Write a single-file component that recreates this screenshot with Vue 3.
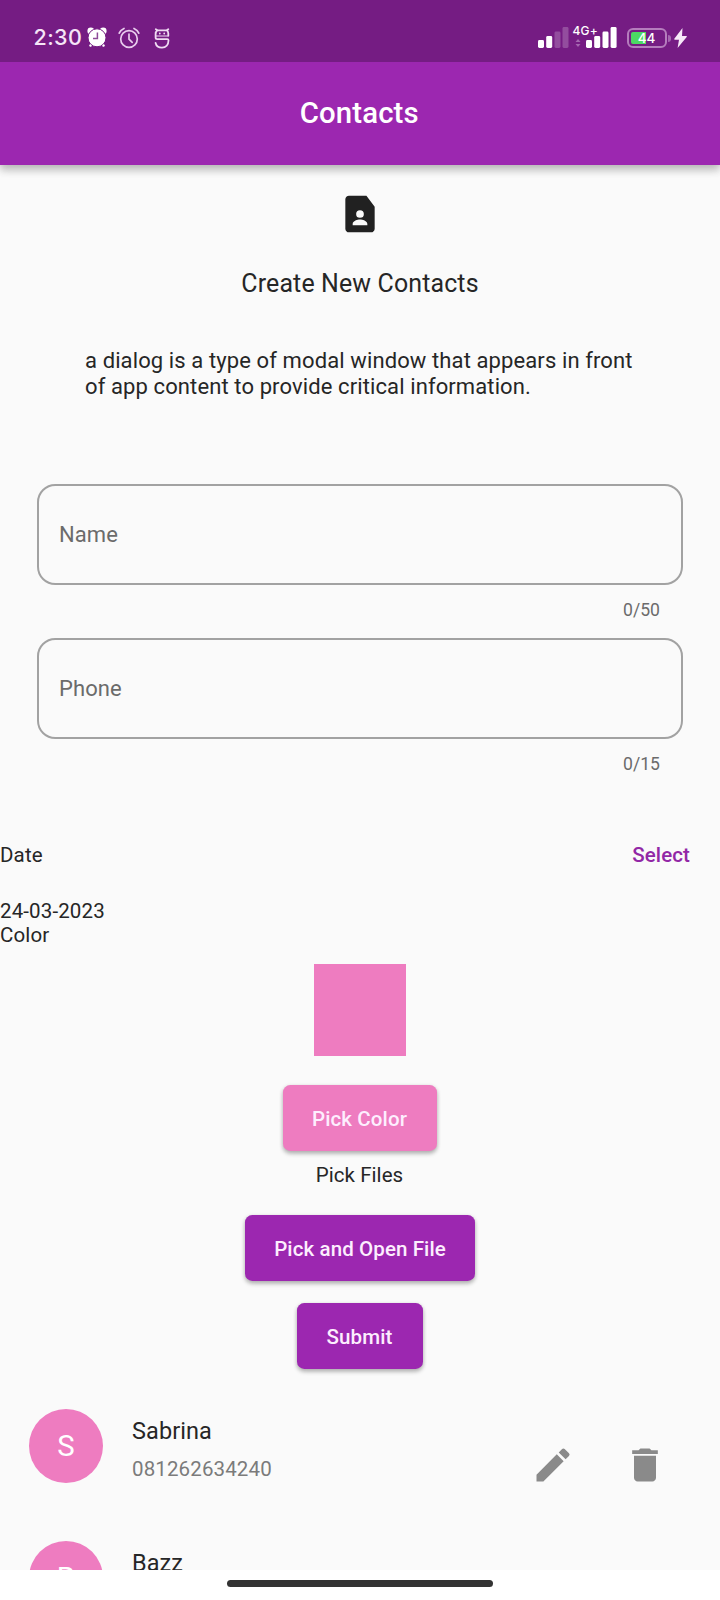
<script setup>
const fields = [
  { label: 'Name', counter: '0/50' },
  { label: 'Phone', counter: '0/15' },
]

const contacts = [
  { name: 'Sabrina', phone: '081262634240' },
  { name: 'Bazz', phone: '' },
]
</script>

<template>
  <div class="screen">
    <header class="top">
      <div class="status">
        <span class="clock">2:30</span>
        <svg class="alarm-solid" width="20" height="20" viewBox="0 0 20 20">
          <g fill="#fff">
            <circle cx="3.8" cy="4" r="3.4" />
            <circle cx="16.2" cy="4" r="3.4" />
            <path d="M4 15l2 2-2 3-2-1zM16 15l-2 2 2 3 2-1z" />
          </g>
          <circle cx="10" cy="10.8" r="9" fill="#fff" stroke="#751c83" stroke-width="1" />
          <path d="M10.4 5.500v6H6" fill="none" stroke="#8d4a98" stroke-width="1.500" />
        </svg>
        <svg class="alarm-line" width="22" height="22" viewBox="0 0 22 22" fill="none" stroke="#e9cdee" stroke-width="1.700" stroke-linecap="round">
          <circle cx="11" cy="12" r="8.300" />
          <path d="M11 7.200v5l3.200 3.200M1.200 6.200C2.200 4 3.700 2.500 6 1.500M20.800 6.200C19.800 4 18.300 2.500 16 1.500" />
        </svg>
        <svg class="s-mark" width="16" height="21" viewBox="0 0 16 21" fill="none" stroke="#f0dcf3" stroke-width="1.800" stroke-linecap="round" stroke-linejoin="round">
          <path d="M14.300 7.700V5.500C14.300 4 13.600 3 12.700 2.300H3.500C2.300 3.200 1.600 4.500 1.600 6.200V9.500c0 1 .6 1.600 1.600 1.600h10.100c.8 0 1.200.4 1.200 1.200 0 4.500-2.600 7.300-6.500 7.300-3.500 0-5.800-1.800-6.400-4.600M3.500 2.300L1.800 1.200M12.700 2.300l1.600-1.100" />
          <path d="M5.800 5.500v.1M10.200 5.500v.1" />
          <path d="M2 8h12" stroke-width="1.200" />
        </svg>
        <span class="spacer"></span>
        <svg class="signal" width="31" height="21" viewBox="0 0 31 21" fill="#fff">
          <rect x="0" y="13" width="6" height="8" rx="1.400" />
          <rect x="8.200" y="9" width="6" height="12" rx="1.400" />
          <rect x="16.500" y="4.500" width="6" height="16.500" rx="1.400" opacity=".22" />
          <rect x="24.500" y="0" width="6" height="21" rx="1.400" opacity=".22" />
        </svg>
        <div class="mobile">
          <span class="net">4G+</span>
          <svg class="arrows" width="6" height="8" viewBox="0 0 6 8" fill="#a566b0">
            <path d="M3 0l2.500 3h-5zM3 8l2.500-3h-5z" />
          </svg>
          <svg class="bars" width="31" height="21" viewBox="0 0 31 21" fill="#fff">
            <rect x="0" y="13" width="6" height="8" rx="1.400" />
            <rect x="8.200" y="9" width="6" height="12" rx="1.400" />
            <rect x="16.500" y="4.500" width="6" height="16.500" rx="1.400" />
            <rect x="24.600" y="0" width="6" height="21" rx="1.400" />
          </svg>
        </div>
        <div class="battery"><span class="level"></span><span class="pct">44</span></div>
        <span class="nub"></span>
        <svg class="bolt" width="13" height="20" viewBox="0 0 13 20" fill="#f6e8f8">
          <path d="M8.500 0L.300 10.800c-.3.5 0 .9.400.9H5L3.600 20 12.700 8.900c.3-.5 0-.9-.4-.9H8z" />
        </svg>
      </div>
      <h1 class="bar">Contacts</h1>
    </header>

    <main class="content">
      <svg class="page-icon" width="44" height="44" viewBox="0 0 24 24" fill="#212121">
        <path d="M15.500 2H6C4.900 2 4 2.900 4 4v16c0 1.100.9 2 2 2h12c1.100 0 2-.9 2-2V8zm-3.500 7.900a2.100 2.100 0 1 1 0 4.200 2.100 2.100 0 0 1 0-4.200zm4 8.300H8v-.8c0-1.600 2.700-2.400 4-2.400s4 .8 4 2.400z" />
      </svg>
      <h2 class="title">Create New Contacts</h2>
      <p class="desc">a dialog is a type of modal window that appears in front<br />of app content to provide critical information.</p>

      <div class="form">
        <div v-for="f in fields" :key="f.label" class="field">
          <div class="box">{{ f.label }}</div>
          <div class="counter">{{ f.counter }}</div>
        </div>
      </div>

      <div class="date-row"><span>Date</span><span class="select">Select</span></div>
      <div class="line first">24-03-2023</div>
      <div class="line">Color</div>

      <div class="picker">
        <div class="swatch"></div>
        <button class="btn pink">Pick Color</button>
        <div class="line files">Pick Files</div>
        <button class="btn open">Pick and Open File</button>
        <button class="btn submit">Submit</button>
      </div>

      <div v-for="c in contacts" :key="c.name" class="contact">
        <div class="avatar">{{ c.name[0] }}</div>
        <div class="who">
          <div class="name">{{ c.name }}</div>
          <div class="phone">{{ c.phone }}</div>
        </div>
        <svg class="edit" width="44" height="44" viewBox="0 0 24 24" fill="#8a8a8a">
          <path d="M3 17.250V21h3.750L17.810 9.940l-3.750-3.750L3 17.250zM20.710 7.040a1 1 0 0 0 0-1.410l-2.340-2.340a1 1 0 0 0-1.410 0l-1.830 1.830 3.750 3.750 1.830-1.830z" />
        </svg>
        <svg class="trash" width="44" height="44" viewBox="0 0 24 24" fill="#8a8a8a">
          <path d="M6 19c0 1.100.9 2 2 2h8c1.100 0 2-.9 2-2V7H6v12zM19 4h-3.500l-1-1h-5l-1 1H5v2h14V4z" />
        </svg>
      </div>
    </main>

    <footer class="nav"><span class="handle"></span></footer>
  </div>
</template>

<style>
body { margin: 0; background: #fff; }
</style>

<style scoped>
.screen {
  width: 720px; height: 1600px; overflow: hidden;
  display: flex; flex-direction: column;
  font-family: Roboto, "Liberation Sans", sans-serif;
  font-size: 20.53px; color: #262626; background: #fff;
}
.top {
  flex: none; height: 164.6px; background: #9c27b0; position: relative; z-index: 1;
  box-shadow: 0 5px 8px rgba(0,0,0,.2), 0 1px 12px rgba(0,0,0,.14);
}
.status { height: 62px; background: #751c83; display: flex; align-items: flex-start; color: #fff; }
.clock { width: 53px; padding-left: 33.500px; margin-right: .5px; margin-top: 23px; font: 500 21.500px/28px Inter, sans-serif; letter-spacing: .4px; color: #f5e5f7; }
.alarm-solid { margin-top: 27px; }
.alarm-line { margin: 27px 0 0 11px; }
.s-mark { margin: 27.500px 0 0 14px; }
.spacer { flex: 1; }
.signal { margin-top: 27px; }
.mobile { position: relative; width: 48px; height: 62px; }
.net { position: absolute; left: 4px; top: 23px; font: 500 12px/15px Inter, sans-serif; letter-spacing: .2px; }
.arrows { position: absolute; left: 6.500px; top: 39px; }
.bars { position: absolute; left: 17px; top: 27px; }
.battery {
  position: relative; box-sizing: border-box; width: 40px; height: 20px; margin: 28px 0 0 10px;
  border: 2px solid #b57dbd; border-radius: 6px;
}
.level { position: absolute; left: 2px; top: 2px; width: 15px; height: 12px; border-radius: 2px 0 0 2px; background: #4cd964; }
.pct { position: absolute; left: 0; right: 0; top: 0; text-align: center; font: 500 13.500px/16px Inter, sans-serif; }
.nub { width: 3px; height: 7px; margin: 35px 3px 0 1px; border-radius: 0 3px 3px 0; background: #a566b0; }
.bolt { margin: 28px 33.500px 0 0; }
.bar { margin: 0; padding-right: 1.500px; font-size: 29.330px; font-weight: 500; line-height: 102px; text-align: center; color: #fff; letter-spacing: .15px; }
.content { height: 1405.500px; flex: none; overflow: hidden; background: #fafafa; display: flex; flex-direction: column; }
.content > * { flex: none; }
.page-icon { margin: 27px auto 0; }
.title { margin: 32.500px 0 0; text-align: center; font-size: 24.930px; font-weight: 400; line-height: 31px; letter-spacing: .14px; }
.desc { margin: 48.500px 0 0 85px; font-size: 22px; line-height: 26px; white-space: nowrap; letter-spacing: .11px; }
.form { margin: 84px 37px 0; }
.field { height: 154px; }
.box {
  box-sizing: border-box; height: 101px; border: 2px solid #a2a2a2; border-radius: 18.300px;
  padding-left: 20px; font-size: 22px; line-height: 98px; color: #6b6b6b; letter-spacing: .1px;
}
.counter { margin: 15px 23px 0 0; text-align: right; font-size: 17.600px; line-height: 20px; color: #6b6b6b; }
.date-row { margin-top: 51px; height: 24px; display: flex; justify-content: space-between; align-items: center; line-height: 24px; letter-spacing: .15px; }
.select { margin-right: 30px; color: #9227a6; font-weight: 500; letter-spacing: .1px; }
.first { margin-top: 32px; }
.line { line-height: 24px; letter-spacing: .12px; }
.picker { display: flex; flex-direction: column; align-items: center; }
.swatch { width: 92px; height: 92px; margin-top: 17px; background: #ee7cc0; }
.btn {
  border: 0; height: 66px; margin: 11px 0; padding: 0 1px 0 0; border-radius: 7.300px; background: #9c27b0; color: #fdeefe;
  font: 500 20.530px/69px Roboto, sans-serif; letter-spacing: .1px;
  box-shadow: 0 3px 4px rgba(0,0,0,.22), 0 1px 4px rgba(0,0,0,.14);
}
.pink { width: 154px; margin-top: 29px; background: #ee7cc0; }
.files { height: 24px; line-height: 26px; padding-right: 1px; letter-spacing: .05px; }
.open { width: 230px; margin-top: 29px; padding: 0; }
.submit { width: 126px; }
.contact { height: 132px; display: flex; align-items: flex-start; }
.avatar {
  width: 74px; height: 74px; margin: 29px 29px 0; border-radius: 50%; background: #ee7cc0;
  color: #fff; text-align: center; font-size: 29.330px; line-height: 74px;
}
.who { width: 399px; padding-top: 37px; }
.name { font-size: 23.470px; line-height: 28px; letter-spacing: .1px; }
.phone { margin-top: 12.500px; line-height: 24px; color: #7b7b7b; letter-spacing: .12px; }
.edit { margin: 63px 48px 0 0; }
.trash { margin-top: 63px; }
.nav { flex: 1; display: flex; justify-content: center; align-items: flex-start; background: #fff; }
.handle { width: 266px; height: 7px; margin-top: 9.500px; border-radius: 4px; background: #333; }
</style>
